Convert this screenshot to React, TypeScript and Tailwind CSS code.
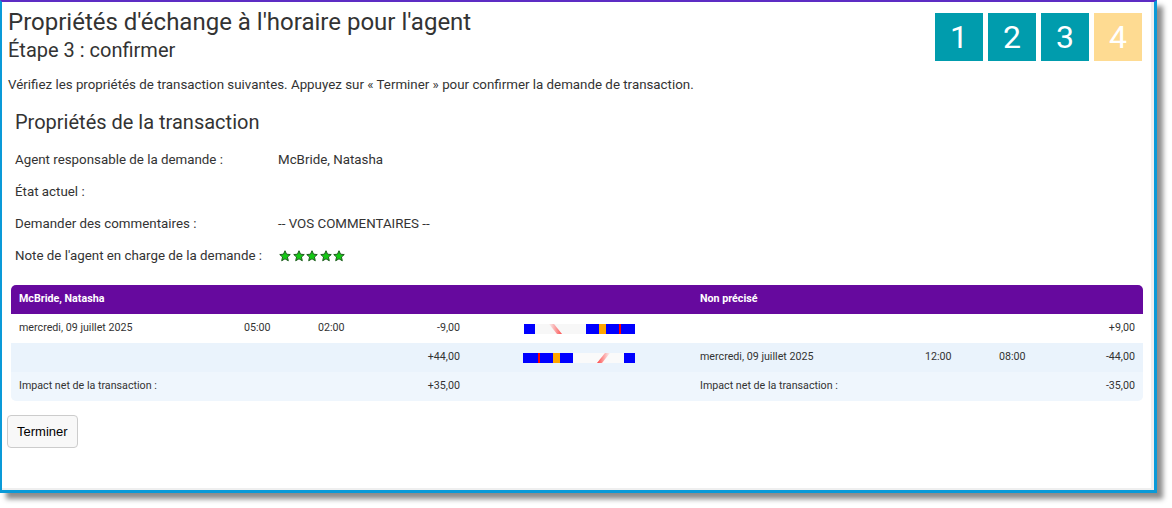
import React from "react";

const Star = () => (
  <svg width="12" height="12" viewBox="0 0 24 24">
    <path
      d="M12 1.5l3.1 6.9 7.4.7-5.6 5 1.7 7.4L12 17.6l-6.6 3.9 1.7-7.4-5.6-5 7.4-.7z"
      fill="#13c913"
      stroke="#1d5a1d"
      strokeWidth="2"
      strokeLinejoin="round"
    />
  </svg>
);

const Bar1 = () => (
  <svg width="113" height="10" viewBox="0 0 113 10" className="block">
    <defs>
      <linearGradient id="g1" x1="0" x2="1" y1="0" y2="0">
        <stop offset="0" stopColor="#ff4040" stopOpacity="0.05" />
        <stop offset="1" stopColor="#ff2020" stopOpacity="0.8" />
      </linearGradient>
    </defs>
    <rect x="12" y="0" width="51" height="10" fill="#f7f7f7" />
    <polygon points="26,0 31,0 39,10 34,10" fill="url(#g1)" />
    <rect x="1" y="0" width="11" height="10" fill="#0000ff" />
    <rect x="63" y="0" width="13" height="10" fill="#0000ff" />
    <rect x="76" y="0" width="7" height="10" fill="#ffa500" />
    <rect x="83" y="0" width="13" height="10" fill="#0000ff" />
    <rect x="96" y="0" width="2" height="10" fill="#ff0000" />
    <rect x="98" y="0" width="14" height="10" fill="#0000ff" />
  </svg>
);

const Bar2 = () => (
  <svg width="113" height="10" viewBox="0 0 113 10" className="block">
    <defs>
      <linearGradient id="g2" x1="0" x2="1" y1="0" y2="0">
        <stop offset="0" stopColor="#ff2020" stopOpacity="0.85" />
        <stop offset="1" stopColor="#ff4040" stopOpacity="0.05" />
      </linearGradient>
    </defs>
    <rect x="50" y="0" width="51" height="10" fill="#fafafa" />
    <polygon points="74,10 79,10 87,0 82,0" fill="url(#g2)" />
    <rect x="0" y="0" width="15" height="10" fill="#0000ff" />
    <rect x="15" y="0" width="2" height="10" fill="#ff0000" />
    <rect x="17" y="0" width="13" height="10" fill="#0000ff" />
    <rect x="30" y="0" width="7" height="10" fill="#ffa500" />
    <rect x="37" y="0" width="13" height="10" fill="#0000ff" />
    <rect x="101" y="0" width="11" height="10" fill="#0000ff" />
  </svg>
);

const gridCols =
  "grid grid-cols-[225px_74px_74px_68px_63px_113px_64px_225px_74px_74px_1fr] px-[8px] items-center";

export default function App() {
  return (
    <div className="w-[1172px] h-[508px] bg-white" style={{ fontFamily: "Roboto, 'Noto Sans', sans-serif" }}>
      <div className="w-[1157px] h-[493px] box-border border-l-2 border-r-[3px] border-b-[3px] border-t-2 border-[#0a9ad8] border-t-[#5d2cc4] bg-white shadow-[inset_-3px_-2px_0_#efefef,6px_6px_5px_rgba(0,0,0,0.45)] text-[#333333]">
        <div className="flex items-start justify-between">
          <div className="pt-[6px] pl-[6px]">
            <div className="text-[24px] leading-[28px]">Propriétés d'échange à l'horaire pour l'agent</div>
            <div className="mt-[2px] text-[20px] leading-[24px]">Étape 3 : confirmer</div>
          </div>
          <div className="flex gap-[5px] pt-[11px] pr-[12px]">
            <div className="w-[48px] h-[48px] bg-[#009cad] text-white text-[32px] flex items-center justify-center">1</div>
            <div className="w-[48px] h-[48px] bg-[#009cad] text-white text-[32px] flex items-center justify-center">2</div>
            <div className="w-[48px] h-[48px] bg-[#009cad] text-white text-[32px] flex items-center justify-center">3</div>
            <div className="w-[48px] h-[48px] bg-[#fedb92] text-white text-[32px] flex items-center justify-center">4</div>
          </div>
        </div>

        <div className="mt-[14px] pl-[6px] text-[13.33px] leading-[18px]">
          Vérifiez les propriétés de transaction suivantes. Appuyez sur « Terminer » pour confirmer la demande de transaction.
        </div>

        <div className="mt-[16px] pl-[13px] text-[20px] leading-[24px]">Propriétés de la transaction</div>

        <div className="mt-[10px] pl-[13px] text-[13.33px]">
          <div className="h-[32px] flex items-center">
            <div className="w-[263px]">Agent responsable de la demande :</div>
            <div>McBride, Natasha</div>
          </div>
          <div className="h-[32px] flex items-center">
            <div className="w-[263px]">État actuel :</div>
            <div></div>
          </div>
          <div className="h-[32px] flex items-center">
            <div className="w-[263px]">Demander des commentaires :</div>
            <div>-- VOS COMMENTAIRES --</div>
          </div>
          <div className="h-[32px] flex items-center">
            <div className="w-[263px]">Note de l'agent en charge de la demande :</div>
            <div className="flex gap-[1.5px] pl-[1px]">
              <Star />
              <Star />
              <Star />
              <Star />
              <Star />
            </div>
          </div>
        </div>

        <div className="mt-[13px] ml-[9px] w-[1132px] rounded-[5px] overflow-hidden text-[10.7px]">
          <div className={`${gridCols} h-[29px] bg-[#66099e] text-white font-bold`}>
            <div className="col-span-7">McBride, Natasha</div>
            <div className="col-span-4">Non précisé</div>
          </div>
          <div className={`${gridCols} h-[29px] bg-white`}>
            <div>mercredi, 09 juillet 2025</div>
            <div>05:00</div>
            <div>02:00</div>
            <div className="text-right">-9,00</div>
            <div></div>
            <div><Bar1 /></div>
            <div></div>
            <div></div>
            <div></div>
            <div></div>
            <div className="text-right">+9,00</div>
          </div>
          <div className={`${gridCols} h-[29px] bg-[#eaf3fc]`}>
            <div></div>
            <div></div>
            <div></div>
            <div className="text-right">+44,00</div>
            <div></div>
            <div><Bar2 /></div>
            <div></div>
            <div>mercredi, 09 juillet 2025</div>
            <div>12:00</div>
            <div>08:00</div>
            <div className="text-right">-44,00</div>
          </div>
          <div className={`${gridCols} h-[29px] bg-[#eff6fd]`}>
            <div className="col-span-3">Impact net de la transaction :</div>
            <div className="text-right">+35,00</div>
            <div className="col-span-3"></div>
            <div className="col-span-3">Impact net de la transaction :</div>
            <div className="text-right">-35,00</div>
          </div>
        </div>

        <div className="mt-[14px] pl-[5px]">
          <button
            className="h-[33px] px-[9px] rounded-[4px] border border-[#cccccc] bg-[#f8f8f8] text-black text-[13px]"
            style={{ fontFamily: "'Liberation Sans', Arial, sans-serif" }}
          >
            Terminer
          </button>
        </div>
      </div>
    </div>
  );
}
